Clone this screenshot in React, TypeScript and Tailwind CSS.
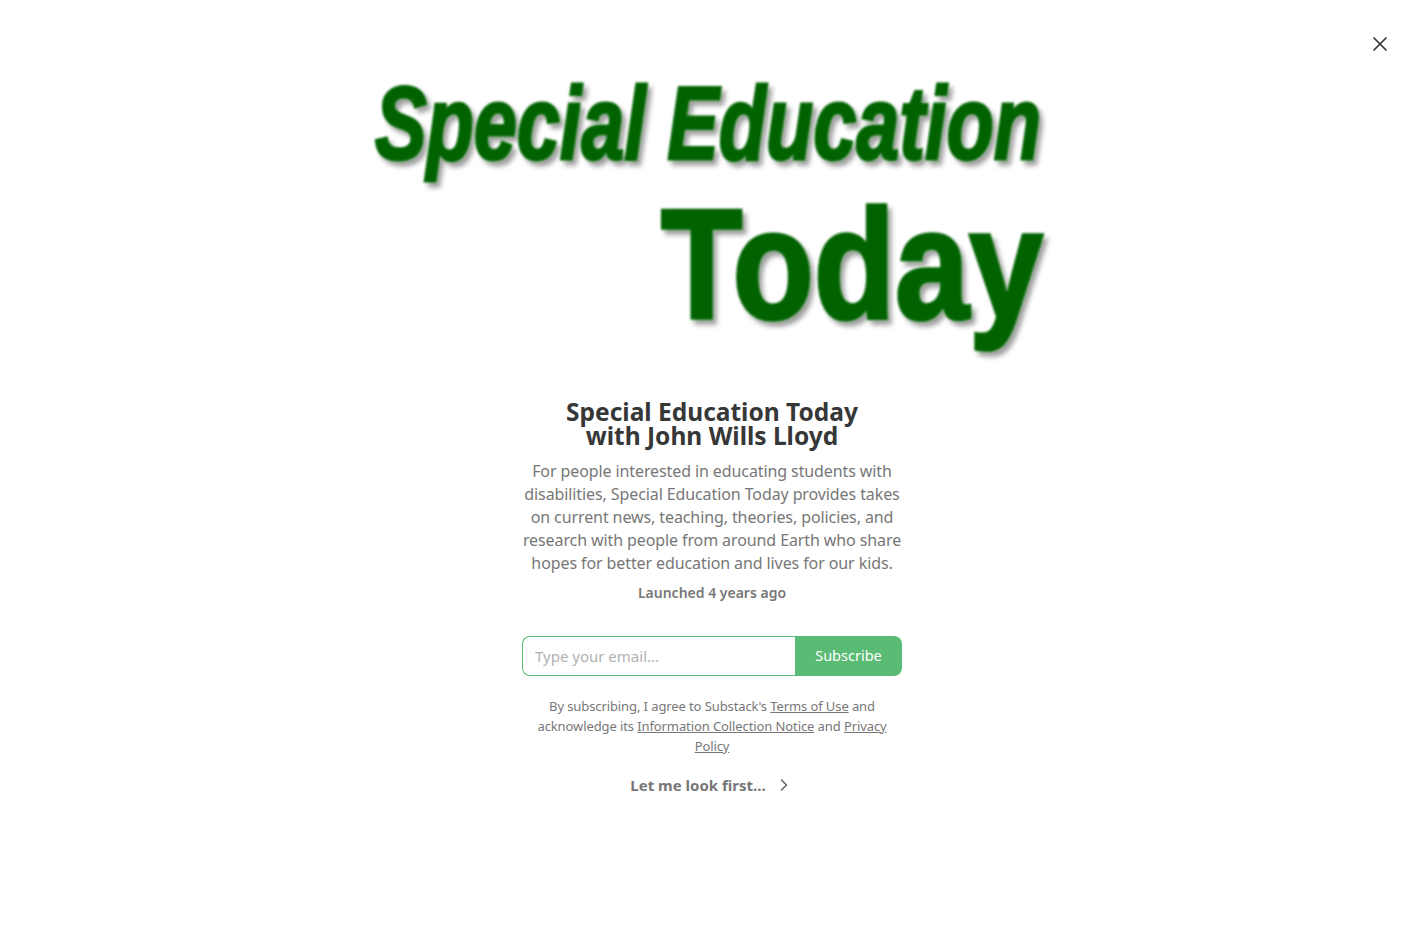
import React from 'react';
import { X, ChevronRight } from 'lucide-react';

const Logo: React.FC = () => (
  <svg width="680" height="300" viewBox="0 0 680 300" className="block overflow-visible" aria-label="Special Education Today">
    <defs>
      <filter id="logoShadow" x="-5%" y="-5%" width="110%" height="110%">
        <feGaussianBlur in="SourceAlpha" stdDeviation="2.4" result="b" />
        <feOffset in="b" dx="4" dy="5" result="o" />
        <feFlood floodColor="#000000" floodOpacity="0.38" />
        <feComposite in2="o" operator="in" result="s" />
        <feGaussianBlur in="SourceGraphic" stdDeviation="1.1" result="t" />
        <feMerge>
          <feMergeNode in="s" />
          <feMergeNode in="t" />
        </feMerge>
      </filter>
    </defs>
    <g filter="url(#logoShadow)" fill="#006400" stroke="#006400" fontFamily="'Liberation Sans', Arial, sans-serif" fontWeight="700">
      <text x="3" y="87" fontSize="103" fontStyle="italic" strokeWidth="2.8" textLength="666" lengthAdjust="spacingAndGlyphs">
        Special Education
      </text>
      <text x="289" y="246" fontSize="156" strokeWidth="3.6" textLength="382" lengthAdjust="spacingAndGlyphs">
        Today
      </text>
    </g>
  </svg>
);

export default function App() {
  return (
    <div className="relative min-h-[933px] bg-white font-['Noto_Sans','Open_Sans',sans-serif]">
      <button className="absolute top-[32px] right-[32px] text-[#363737]">
        <X size={24} strokeWidth={1.7} />
      </button>
      <div className="flex flex-col items-center pt-[72px]">
        <Logo />
        <h1 className="mt-[28px] text-center text-[24.5px] leading-[24px] font-bold text-[#363737]">
          Special Education Today
          <br />
          with John Wills Lloyd
        </h1>
        <p className="mt-[12px] w-[380px] text-center text-[16px] leading-[23px] tracking-[-0.1px] text-[#777777]">
          For people interested in educating students with disabilities, Special Education Today provides takes on current news, teaching, theories, policies, and research with people from around Earth who share hopes for better education and lives for our kids.
        </p>
        <div className="mt-[8px] text-[14px] leading-[20px] font-semibold text-[#777777]">Launched 4 years ago</div>
        <form className="mt-[33px] flex h-[40px] w-[380px]">
          <input
            placeholder="Type your email..."
            className="h-full min-w-0 flex-1 rounded-l-[8px] border border-r-0 border-[#5abb74] bg-white px-[12px] text-[15px] text-[#363737] outline-none placeholder:text-[#b1b1b1]"
          />
          <button type="button" className="h-full w-[107px] rounded-r-[8px] bg-[#5abb74] text-[14.5px] text-white">
            Subscribe
          </button>
        </form>
        <p className="mt-[20px] w-[380px] text-center text-[13px] leading-[20px] tracking-[-0.1px] text-[#777777]">
          By subscribing, I agree to Substack's <a className="underline">Terms of Use</a> and acknowledge its{' '}
          <a className="underline">Information Collection Notice</a> and <a className="underline">Privacy Policy</a>
        </p>
        <button className="mt-[19px] flex items-center gap-[8px] text-[15px] leading-[20px] font-bold text-[#777777]">
          Let me look first...
          <ChevronRight size={20} strokeWidth={1.8} className="text-[#666666]" />
        </button>
      </div>
    </div>
  );
}
